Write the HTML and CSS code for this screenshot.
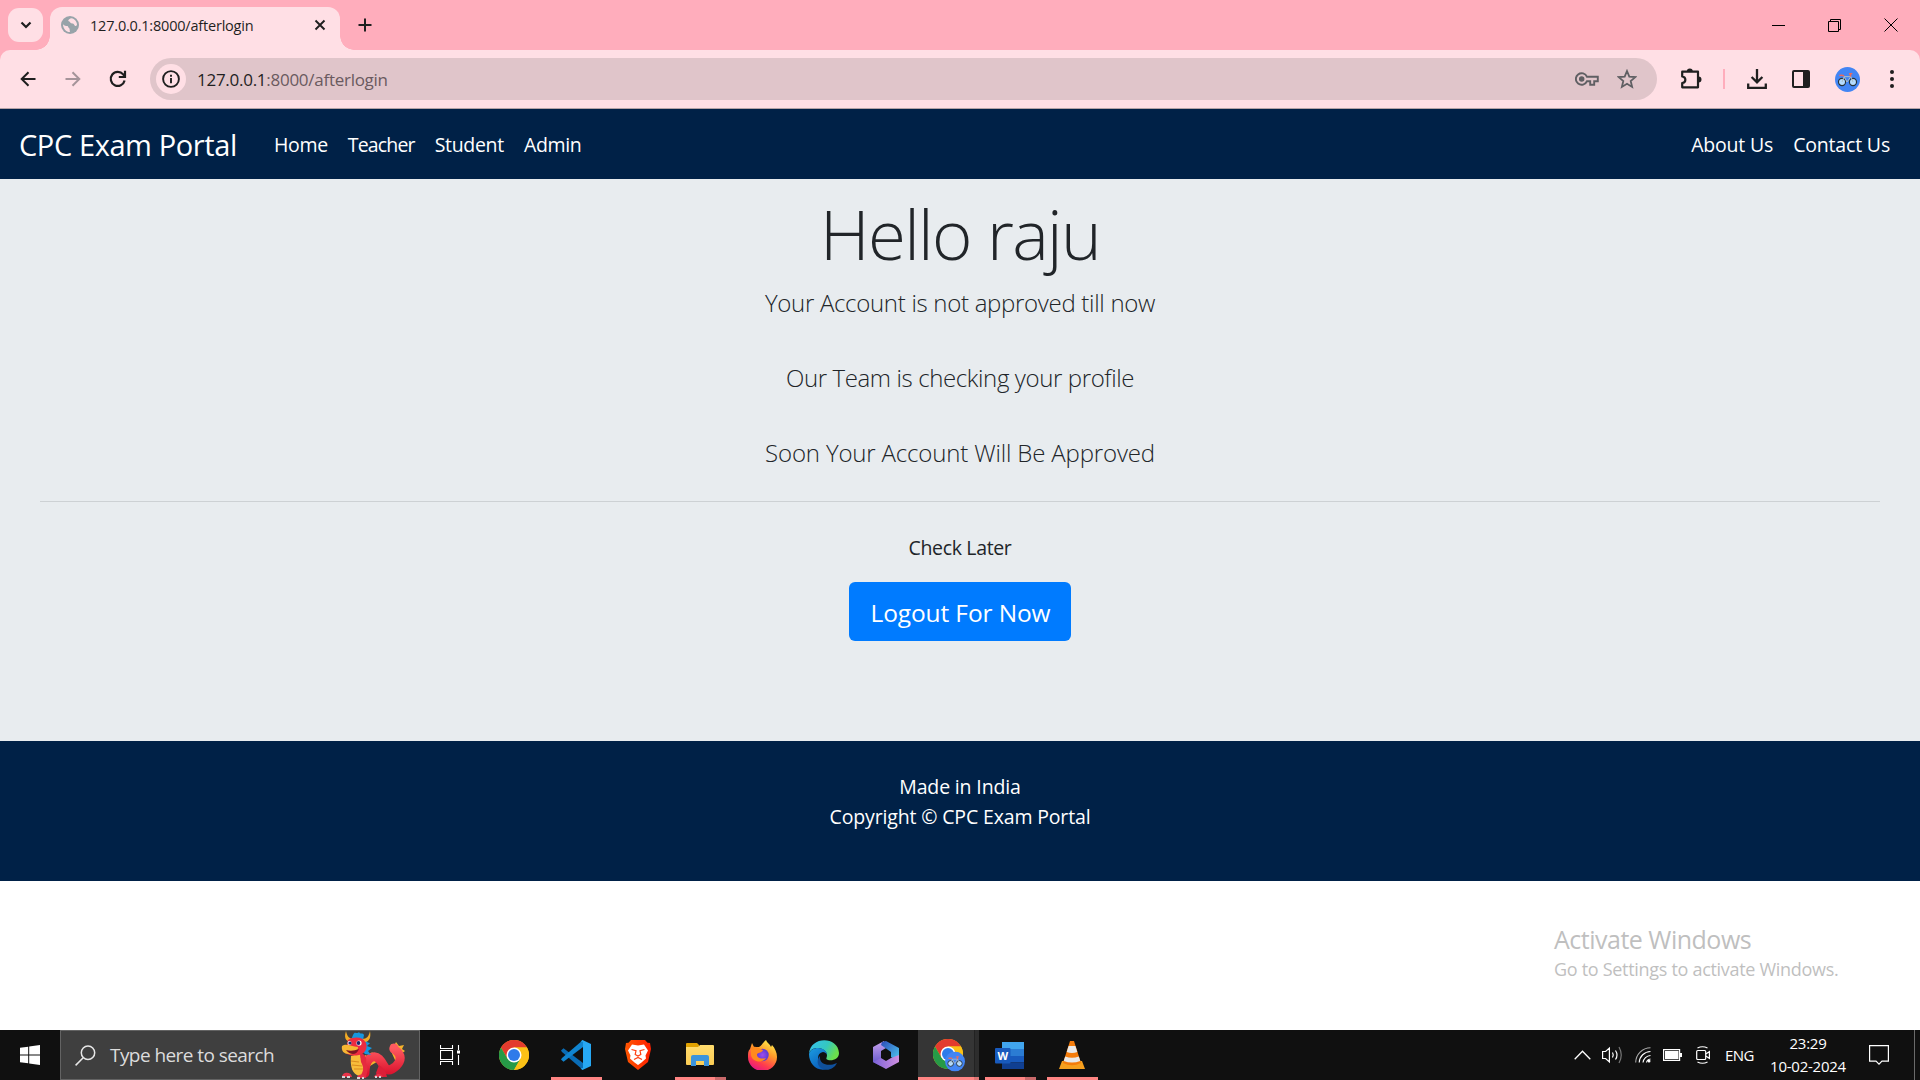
FILE: index.html
```html
<!DOCTYPE html>
<html lang="en">
<head>
<meta charset="utf-8">
<title>127.0.0.1:8000/afterlogin</title>
<link rel="stylesheet" href="styles.css">
</head>
<body>
<svg class="defs" width="0" height="0">
  <defs>
    <linearGradient id="ff" x1="0.8" y1="0" x2="0.3" y2="1"><stop offset="0" stop-color="#fff44f"/><stop offset=".4" stop-color="#ff9a2a"/><stop offset=".75" stop-color="#ff3b4e"/><stop offset="1" stop-color="#e31587"/></linearGradient>
    <radialGradient id="ffg"><stop offset="0" stop-color="#a04cf0"/><stop offset="1" stop-color="#5a3bd0"/></radialGradient>
    <linearGradient id="edgeA" x1="0" y1="0" x2="1" y2="0.4"><stop offset="0" stop-color="#35c1f1"/><stop offset=".6" stop-color="#34c8c0"/><stop offset="1" stop-color="#6be04c"/></linearGradient>
    <linearGradient id="edgeB" x1="0" y1="0" x2="0.6" y2="1"><stop offset="0" stop-color="#1b9de2"/><stop offset="1" stop-color="#0a5ebc"/></linearGradient>
    <linearGradient id="brave" x1="0" y1="0" x2="1" y2="0"><stop offset="0" stop-color="#ff5601"/><stop offset="1" stop-color="#ff2000"/></linearGradient>
    <linearGradient id="mA" x1="0" y1="0" x2="0" y2="1"><stop offset="0" stop-color="#c9a3ee"/><stop offset="1" stop-color="#5b50c8"/></linearGradient>
    <linearGradient id="mB" x1="0" y1="0" x2="1" y2="1"><stop offset="0" stop-color="#2c4bb8"/><stop offset="1" stop-color="#4fd0f2"/></linearGradient>
    <linearGradient id="mC" x1="0" y1="0" x2="1" y2="0"><stop offset="0" stop-color="#7b62d8"/><stop offset="1" stop-color="#cf8fe0"/></linearGradient>
    <linearGradient id="folder" x1="0" y1="0" x2="0" y2="1"><stop offset="0" stop-color="#ffdc6e"/><stop offset="1" stop-color="#fbcc54"/></linearGradient>
    <linearGradient id="drag" x1="0" y1="0" x2="0" y2="1"><stop offset="0" stop-color="#ff5a60"/><stop offset="1" stop-color="#dc1530"/></linearGradient>
    <symbol id="chrome" viewBox="0 0 48 48">
      <circle cx="24" cy="24" r="24" fill="#fbc116"/>
      <path d="M3.2 12A24 24 0 0 1 44.8 12H24L13.6 30Z" fill="#e33b2e"/>
      <path d="M3.2 12A24 24 0 0 0 24 48L34.4 30H13.6Z" fill="#269a47"/>
      <path d="M24 12H44.8A24 24 0 0 1 24 48L34.4 30Z" fill="#fbc116"/>
      <circle cx="24" cy="24" r="12" fill="#fff"/><circle cx="24" cy="24" r="9.6" fill="#2f7bea"/>
    </symbol>
    <symbol id="bike" viewBox="0 0 26 26">
      <circle cx="13" cy="13" r="13" fill="#4285f4"/>
      <g fill="#b5dcff" stroke="#263238" stroke-width="1.2"><circle cx="7.3" cy="15.600" r="3.700"/><circle cx="18.700" cy="15.600" r="3.700"/></g>
      <path d="M7.300 15.600L9.500 10h7l2.200 5.600M9.500 10L12.500 15.600L16.500 10" fill="none" stroke="#b0bec5" stroke-width="1"/>
      <path d="M4.500 9q2-1 5 0M16.500 10l-1-3h2.500" fill="none" stroke="#ef6c5a" stroke-width="1.600"/>
    </symbol>
  </defs>
</svg>

<header class="browser">
  <div class="tabstrip">
    <div class="tab-search"><svg width="12" height="8" viewBox="0 0 12 8"><path d="M1.500 1.500L6 6l4.500-4.500" fill="none" stroke="#1f1f1f" stroke-width="2.200"/></svg></div>
    <div class="tab">
      <svg class="globe" width="18" height="18" viewBox="0 0 18 18"><circle cx="9" cy="9" r="9" fill="#98a3a9"/><path d="M2 8.200c1.500 1.600 3 1.800 4.200 1.900c1.200.2 1 1.700 2 2.200c.8.400.2 2.200.8 3.700C5 16 2 12.500 2 8.200M10.500 2.200c-1.500.2-3.500 1.300-3.200 2.500c.2 1 2 .6 2 1.800c.1 1 1.600.9 2.600 1.100c1.400.3 1.300 2.200 2.400 2.400c.8.200 1.500-.5 1.700-1.200C16 5.300 13.600 2.800 10.500 2.200" fill="#ffdfe5"/></svg>
      <span class="tab-title">127.0.0.1:8000/afterlogin</span>
      <svg class="tab-close" width="12" height="12" viewBox="0 0 12 12"><path d="M1.500 1.500l9 9M10.500 1.500l-9 9" stroke="#1f1f1f" stroke-width="1.900"/></svg>
    </div>
    <svg class="tab-new" width="14" height="14" viewBox="0 0 14 14"><path d="M7 .5v13M.5 7h13" stroke="#1f1f1f" stroke-width="2"/></svg>
    <div class="window-controls">
      <svg width="13" height="13" viewBox="0 0 13 13"><path d="M0 6.500h13" stroke="#000"/></svg>
      <svg width="13" height="13" viewBox="0 0 13 13" fill="none" stroke="#000"><path d="M.5 2.500h10v10H.5zM2.500 2.500v-2h10v10h-2"/></svg>
      <svg width="14" height="14" viewBox="0 0 14 14"><path d="M.5 .5l13 13M13.500 .5l-13 13" stroke="#000"/></svg>
    </div>
  </div>
  <div class="toolbar">
    <div class="nav-buttons">
      <svg width="16" height="16" viewBox="0 0 16 16" fill="none" stroke="#1f1f1f" stroke-width="2"><path d="M15.500 8H2M8.500 1.200L1.700 8l6.800 6.800"/></svg>
      <svg width="16" height="16" viewBox="0 0 16 16" fill="none" stroke="#a5949a" stroke-width="2"><path d="M.5 8H14M7.500 1.200L14.300 8l-6.800 6.800"/></svg>
      <svg width="18" height="18" viewBox="0 0 18 18" fill="none" stroke="#1f1f1f" stroke-width="2.200"><path d="M15.600 10.400A7 7 0 1 1 14.200 4.400L15.800 6"/><path d="M16 .8V7H9.800"/></svg>
    </div>
    <div class="omnibox">
      <span class="site-info"><svg width="18" height="18" viewBox="0 0 18 18"><circle cx="9" cy="9" r="7.900" fill="none" stroke="#1f1f1f" stroke-width="1.900"/><path d="M9 8v5.200M9 4.800v2" stroke="#1f1f1f" stroke-width="1.900"/></svg></span>
      <span class="url"><b>127.0.0.1</b>:8000/afterlogin</span>
      <svg class="key" width="24" height="14" viewBox="0 0 24 14" fill="none" stroke="#5f5f63" stroke-width="1.900"><path d="M12 4.800A5.800 5.800 0 1 0 12 9.200H15.200V12.800H19.200V9.200H22.800V4.800Z"/><circle cx="6.700" cy="7" r="1.800" fill="#5f5f63"/></svg>
      <svg class="star" width="20" height="20" viewBox="0 0 20 20"><path d="M10 2l2.300 5.600 6 .5-4.600 3.900 1.400 5.900L10 14.800 4.900 17.900l1.400-5.900L1.700 8.100l6-.5z" fill="none" stroke="#5f5f63" stroke-width="1.800"/></svg>
    </div>
    <div class="toolbar-right">
      <svg width="22" height="22" viewBox="0 0 22 22"><path d="M2.200 3.700H18v15.600H2.200V15c4.200-.5 4.200-6 0-6.500Z" fill="none" stroke="#1f1f1f" stroke-width="2.200" stroke-linejoin="round"/><path d="M6.800 3.500a3 3 0 0 1 6 0zM18.500 8.500a3 3 0 0 1 0 6z" fill="#1f1f1f"/></svg>
      <i class="divider"></i>
      <svg width="20" height="20" viewBox="0 0 20 20" fill="none" stroke="#1f1f1f" stroke-width="2.300"><path d="M10 0v13M4.600 8L10 13.300 15.400 8M1.200 14.500v4.300h17.600v-4.300"/></svg>
      <svg width="18" height="18" viewBox="0 0 18 18"><rect x="1" y="1" width="16" height="16" rx="1" fill="none" stroke="#1f1f1f" stroke-width="2"/><path d="M11 1h6v16h-6z" fill="#1f1f1f"/></svg>
      <svg width="25" height="25"><use href="#bike"/></svg>
      <svg width="4" height="18" viewBox="0 0 4 18" fill="#1f1f1f"><circle cx="2" cy="2" r="2"/><circle cx="2" cy="9" r="2"/><circle cx="2" cy="16" r="2"/></svg>
    </div>
  </div>
</header>

<nav class="navbar">
  <a class="brand">CPC Exam Portal</a>
  <div class="links"><a>Home</a><a class="tight">Teacher</a><a>Student</a><a>Admin</a></div>
  <div class="links end"><a>About Us</a><a>Contact Us</a></div>
</nav>

<main class="jumbotron">
  <h1>Hello raju</h1>
  <p class="lead">Your Account is not approved till now</p>
  <p class="lead narrow">Our Team is checking your profile</p>
  <p class="lead wide">Soon Your Account Will Be Approved</p>
  <hr>
  <p class="later">Check Later</p>
  <a class="btn">Logout For Now</a>
</main>

<footer class="footer">
  <p>Made in India</p>
  <p>Copyright © CPC Exam Portal</p>
</footer>

<section class="desktop">
  <div class="watermark">
    <div class="wm-title">Activate Windows</div>
    <div class="wm-sub">Go to Settings to activate Windows.</div>
  </div>
</section>

<div class="taskbar">
  <div class="start"><svg width="20" height="20" viewBox="0 0 20 20" fill="#fff"><path d="M0 2.800L8.200 1.700V9.500H0zM9.200 1.500L20 0v9.500H9.200zM0 10.500h8.200v7.800L0 17.200zM9.200 10.500H20V20L9.200 18.500z"/></svg></div>
  <div class="search">
    <svg width="21" height="21" viewBox="0 0 21 21" fill="none" stroke="#e8e8e8" stroke-width="1.500"><circle cx="13" cy="7.800" r="6.700"/><path d="M8.200 12.800L.6 20.400"/></svg>
    <span>Type here to search</span>
    <svg class="dragon" width="66" height="48" viewBox="0 0 66 48">
      <path d="M20 32l-1-5 4 1 1-4 4 2 3-5 3 4 5-1v5l-10 6zM49 18l1-5 3 2 2-4 3 4 5-1-2 4 3 2-4 3 3 3-5 1 0 4-4-2z" fill="#f5b32a"/>
      <path d="M24 42C24 28 32 22 38 28s6 14 13 10 10-10 7-15-6-4-5-6" fill="none" stroke="url(#drag)" stroke-width="9" stroke-linecap="round" stroke-linejoin="round"/>
      <path d="M38 34q7 4 8 12h-9l-2-4z" fill="#dc1f38"/>
      <path d="M10 25l10-3c-1 6 1 9 4 14c2 4 0 9-5 9c-8-1-10-10-9-20z" fill="#f7bd3b"/>
      <path d="M10 30l8 1M11 34l10 1M13 38l10 0" stroke="#d98b1e" stroke-width="1.200"/>
      <path d="M19 23c5-1 7 4 6 9c3 5 1 10 0 14h-6c4-7 4-9 1-15z" fill="#e52a3f"/>
      <path d="M12 4c2-5 4 0 6-3c1 3 4 0 5 3l-1 5c4-1 3 3 7 3l-3 3 5 2-4 3 3 4-6-1-5-6-9-8z" fill="#1597e0"/>
      <path d="M5 0c-2 6-1 10 5 11l3-3C8 8 6 5 5 0M29 0c1 6 0 11-6 11l-2-3c5 0 7-3 8-8" fill="#f3ab25"/>
      <path d="M7 9c7-4 15-3 18 3c2 5-1 11-7 12c-5 1-8 1-14-2z" fill="#ee2b40"/>
      <path d="M1 15c4-3 9 0 16 1c0 5-4 8-9 7c-5 0-8-3-7-8z" fill="#f7b733"/>
      <path d="M5 19q6 2 13-1q-2 5-6 5q-4 0-7-4z" fill="#7d1423"/>
      <circle cx="8.500" cy="12" r="2" fill="#fff"/><circle cx="18" cy="12" r="2.600" fill="#fff"/><circle cx="9" cy="12" r="1.600" fill="#1b2a6b"/><circle cx="17.500" cy="12" r="1.900" fill="#1b2a6b"/>
      <path d="M1 46c0-5 9-6 10 0zM16 47c1-5 8-4 9 0zM33 46c1-4 8-4 9 0z" fill="#e8344a"/>
      <path d="M1 46h3M6 46h3M16 47h3M21 47h2M34 46h2M38 46h2" stroke="#d9d3d8" stroke-width="2"/>
    </svg>
  </div>
  <div class="apps">
    <div class="app view"><svg width="20" height="20" viewBox="0 0 20 20" fill="none" stroke="#fff"><path d="M.5 5.500h12v9H.5zM.5 0v3.500h12V0M.5 20v-3.500h12V20M18.500 0v5M18.500 10v10" stroke-width="1.100"/><path d="M17 5.500h3v3h-3z" fill="#fff" stroke="none"/></svg></div>
    <div class="app"><svg width="30" height="30"><use href="#chrome"/></svg></div>
    <div class="app open"><svg width="30" height="30" viewBox="0 0 30 30"><path d="M0 10.500L2.500 8.200 22 23 22 30 1 12z" fill="#0a6cb5"/><path d="M0 19.500L2.500 21.800 22 7 22 0 1 18z" fill="#1084cf"/><path d="M21.500 0L30 4v22l-8.500 4-2-1.500 2.500-.5V2l-2.500-.5z" fill="#27a8f3"/></svg></div>
    <div class="app"><svg width="26" height="30" viewBox="0 0 26 30"><path d="M6 0h14l2.500 2.700L25 3l1 6-3 13-10 8L3 22 0 9 1 3l2.500-.3z" fill="url(#brave)"/><path d="M7 4.500l6 1 6-1 4 6-2.500 5 .5 3-4.500 4-3.500 2.500-3.500-2.500-4.500-4 .5-3-2.500-5z" fill="#fff"/><path d="M6.500 9.500l4.500 1.200-.8 3.800 2.800 1.500 2.800-1.500-.8-3.800 4.500-1.200M9 19.500l4-2 4 2" fill="none" stroke="#ff4012" stroke-width="1.200"/></svg></div>
    <div class="app open multi"><svg width="28" height="24" viewBox="0 0 28 24"><path d="M0 1q0-1 1-1h10l2 2v3H0z" fill="#e0a100"/><path d="M0 4h12l2-2h13q1 0 1 1v18q0 1-1 1H1q-1 0-1-1z" fill="url(#folder)"/><path d="M5 23V14q0-2 2-2h14q2 0 2 2v9h-5v-5h-8v5z" fill="#3b94dc"/></svg></div>
    <div class="app"><svg width="29" height="30" viewBox="0 0 29 30"><path d="M2 9L4 3l2 4 5 0C14 6 15 2 18 0c1 3 4 4 5 7l1-2c3 3 5 8 5 12a14 13.500 0 0 1-29 0C0 13 0 11 2 9z" fill="url(#ff)"/><circle cx="14.500" cy="15" r="6.200" fill="url(#ffg)"/><path d="M3 8c4-3 7 0 12 2c-1 3-4 2-6 4c0 5 5 5 9 4c-4 6-14 4-15-3z" fill="#ff8a1d"/></svg></div>
    <div class="app"><svg width="30" height="30" viewBox="0 0 30 30"><path d="M0 14C1-4 29-4 30 13c0 6-6 8-11 7c-3-1-1-2-1-5c0-4-5-7-9-7C4 8 1 10 0 14z" fill="url(#edgeA)"/><path d="M0 14c1-4 5-6 9-6c5 0 9 3 9 7c0 0-1-3-4-3c-8 1-6 14 4 17C8 32 0 24 0 14z" fill="url(#edgeB)"/><path d="M11 18c0 6 8 9 17 5c-3 6-9 8-14 6c-6-2-7-9-3-13z" fill="#10509b"/></svg></div>
    <div class="app"><svg width="26" height="28" viewBox="0 0 26 28"><path d="M11 0L0 6v15l8 4V10l5-3z" fill="url(#mA)"/><path d="M9 1l4-1 13 7v14l-8-5v-5L8 4z" fill="url(#mB)"/><path d="M26 21l-13 7L0 21l8-4 5 3 5-3 8-3z" fill="url(#mC)"/><path d="M13 9l4.500 2.500v5L13 19l-4.500-2.500v-5z" fill="#101010"/></svg></div>
    <div class="app open multi active"><svg width="32" height="33" viewBox="0 0 32 33"><use href="#chrome" width="30" height="30"/><use href="#bike" x="12" y="12.500" width="20" height="20"/></svg></div>
    <div class="app open multi"><svg width="30" height="27" viewBox="0 0 30 27"><path d="M7 0h22v7H7z" fill="#41a5ee"/><path d="M7 7h22v7H7z" fill="#2b7cd3"/><path d="M7 14h22v6.500H7z" fill="#185abd"/><path d="M7 20.500h22V27H7z" fill="#103f91"/><rect y="6" width="15.500" height="15.500" rx="1" fill="#185abd"/><text x="7.800" y="18" class="word-w">W</text></svg></div>
    <div class="app open"><svg width="26" height="28" viewBox="0 0 26 28"><path d="M3 20h20l3 8H0z" fill="#f7a01e"/><path d="M11 0h4l7 22q-9 4.500-18 0z" fill="#f57c0a"/><path d="M9.600 5h6.800l1.900 6q-5.300 2-10.600 0zM6.200 15.500q6.800 2.500 13.600 0l1.500 4.500q-8.300 3-16.600 0z" fill="#e9e9e9"/></svg></div>
  </div>
  <div class="tray">
    <svg class="up" width="17" height="10" viewBox="0 0 17 10"><path d="M.7 9.200L8.500 1.200l7.800 8" fill="none" stroke="#fff" stroke-width="1.300"/></svg>
    <svg class="vol" width="21" height="18" viewBox="0 0 21 18" fill="none" stroke="#fff" stroke-width="1.200"><path d="M.6 5.500h3L7.400 2v14L3.600 12.500h-3zM10.500 6.500q1.500 2.500 0 5M13.500 4.500q3 4.500 0 9"/><path d="M17 1q4.500 8 0 16" stroke="#777"/></svg>
    <svg class="wifi" width="16" height="16" viewBox="0 0 16 16" fill="none" stroke="#fff" stroke-width="1.100"><path d="M.7 15.500A15 15 0 0 1 15.500 .7" stroke="#aaa"/><path d="M4.200 15.500A11.500 11.500 0 0 1 15.500 4.500M8 15.500A8 8 0 0 1 15.500 8.500"/><path d="M11.500 15.500q.5-3 4-3.500"/><circle cx="14" cy="14" r="1.500" fill="#fff" stroke="none"/></svg>
    <svg class="bat" width="19" height="12" viewBox="0 0 19 12"><path d="M.6 .6h16v10.800H.6z" fill="none" stroke="#fff" stroke-width="1.200"/><path d="M2 2h13.500v8H2zM17 4h2v4h-2z" fill="#fff"/></svg>
    <svg class="meet" width="15" height="18" viewBox="0 0 15 18" fill="none" stroke="#fff" stroke-width="1.200"><rect x=".7" y="4.500" width="9" height="9" rx="1"/><path d="M9.700 8l3.700-2.300v6.600L9.700 10M1.500 2Q6.500-.5 11.500 2M1.500 16q5 2.500 10 0"/></svg>
    <span class="lang">ENG</span>
    <div class="clock"><span>23:29</span><span>10-02-2024</span></div>
    <svg class="note" width="20" height="20" viewBox="0 0 20 20"><path d="M.6 .6h18.800v15.500h-6.400l-3 3-3-3H.6z" fill="none" stroke="#fff" stroke-width="1.200"/></svg>
    <i class="peek"></i>
  </div>
</div>
</body>
</html>
```
FILE: styles.css
```css
* { box-sizing: border-box; }
body { margin: 0; width: 1920px; height: 1080px; overflow: hidden; display: flex; flex-direction: column; background: #fff; color: #212529; font-family: "Open Sans", "Noto Sans", sans-serif; font-size: 19.500px; }
p, h1 { margin: 0; }
svg { display: block; flex: none; }
span, a { white-space: nowrap; }
.defs { position: absolute; }

/* browser window */
.browser { height: 109px; flex: none; background: #ffadbc; border-bottom: 1px solid #b5a3a7; }
.tabstrip { height: 50px; display: flex; align-items: center; padding: 0 0 0 8px; }
.tab-search { width: 35px; height: 34px; border-radius: 11px; background: #ffdfe5; display: flex; align-items: center; justify-content: center; }
.tab { position: relative; width: 290px; height: 43px; margin: 7px 0 0 7px; padding: 0 14px 7px 11px; border-radius: 12px 12px 0 0; background: #ffdfe5; display: flex; align-items: center; }
.tab::before, .tab::after { content: ""; position: absolute; bottom: 0; width: 14px; height: 14px; }
.tab::before { left: -14px; background: radial-gradient(circle at 0 0, transparent 13.500px, #ffdfe5 14px); }
.tab::after { right: -14px; background: radial-gradient(circle at 100% 0, transparent 13.500px, #ffdfe5 14px); }
.tab-title { margin-left: 11px; font-size: 14.500px; letter-spacing: -.2px; color: #1f1f1f; }
.tab-close { margin-left: auto; }
.tab-new { margin-left: 18px; }
.window-controls { margin-left: auto; display: flex; align-items: center; gap: 43px; padding-right: 22px; }
.toolbar { height: 58px; border-radius: 10px 10px 0 0; background: #ffdfe5; display: flex; align-items: center; }
.nav-buttons { width: 150px; padding-left: 20px; display: flex; align-items: center; gap: 28.500px; }
.omnibox { width: 1507px; height: 42px; border-radius: 21px; background: #e0c5ca; display: flex; align-items: center; padding: 0 20px 0 6px; }
.site-info { width: 30px; height: 30px; border-radius: 50%; background: #ffdfe5; display: flex; align-items: center; justify-content: center; }
.url { margin-left: 11px; font-size: 17px; letter-spacing: -.27px; color: #6a5a5f; }
.url b { font-weight: 400; color: #1f1f1f; }
.key { margin-left: auto; }
.star { margin-left: 18px; }
.toolbar-right { flex: 1; display: flex; align-items: center; padding-left: 23px; }
.divider { width: 2px; height: 20px; background: #ffadbc; margin: 0 22px 0 21px; }
.toolbar-right svg + svg { margin-left: 25px; }
.toolbar-right svg:last-child { margin-left: 30px; }

/* portal page */
.navbar { height: 70px; flex: none; background: #002147; color: #fff; display: flex; align-items: center; padding: 1px 30px 0 19px; }
.brand { font-size: 29px; letter-spacing: -.4px; width: 255px; }
.links { display: flex; gap: 20px; letter-spacing: -.32px; }
.tight { letter-spacing: -.84px; }
.links.end { margin-left: auto; letter-spacing: -.18px; }
.jumbotron { height: 562px; flex: none; background: #e8ecef; text-align: center; padding: 13px 40px 0; }
h1 { font-size: 69px; line-height: 82px; padding-bottom: 2px; font-weight: 300; letter-spacing: -1.700px; }
.lead { font-size: 24px; line-height: 38px; font-weight: 300; letter-spacing: -.3px; margin: 8px 0 37px; }
.lead.wide { letter-spacing: -.16px; }
.lead.narrow { letter-spacing: -.38px; }
.lead + .lead { margin-top: 0; }
hr { margin: -8px 0 0; border: 0; border-top: 1px solid #cdd1d4; }
.later { line-height: 30px; letter-spacing: -.34px; margin: 31px 0 19px; }
.btn { display: inline-flex; width: 222px; height: 59px; padding: 1px 0 0 1px; border-radius: 6px; background: #007bff; color: #fff; font-size: 24.500px; letter-spacing: -.12px; align-items: center; justify-content: center; }
.footer { height: 140px; flex: none; background: #002147; color: #fff; text-align: center; padding-top: 31px; line-height: 30px; letter-spacing: -.15px; }

/* desktop */
.desktop { flex: 1; padding: 38px 0 0 1554px; }
.watermark { color: #bfbfbf; }
.wm-title { font-size: 25px; line-height: 40px; letter-spacing: -.5px; }
.wm-sub { font-size: 18px; line-height: 21px; letter-spacing: -.3px; }
.taskbar { height: 50px; flex: none; background: #101010; display: flex; color: #fff; }
.start { width: 60px; display: flex; align-items: center; justify-content: center; }
.search { width: 360px; background: #3f3f3f; border: 1px solid #636363; display: flex; align-items: center; padding-left: 14px; color: #dcdcdc; font-size: 19px; letter-spacing: -.56px; gap: 14px; }
.dragon { margin-left: auto; margin-right: 12px; }
.apps { display: flex; }
.app { position: relative; width: 62px; display: flex; align-items: center; justify-content: center; }
.view { width: 63px; padding-right: 3px; }
.open::after { content: ""; position: absolute; left: 6px; bottom: 0; width: 51px; height: 3px; background: #ff8583; }
.multi::after { background: linear-gradient(90deg, #ff8583 40px, #c9696a 40px); }
.active { background: linear-gradient(90deg, #353535 56px, #222 56px, #222 57px, #2d2d2d 57px); width: 61px; margin-left: 1px; }
.active::after { left: 0; width: 61px; background: linear-gradient(90deg, #ff8583 56px, #dd7675 56px); }
.word-w { font: 700 11px "Open Sans", sans-serif; fill: #fff; text-anchor: middle; letter-spacing: 0; }
.tray { margin-left: auto; display: flex; align-items: center; font-size: 15px; letter-spacing: -.24px; }
.vol { margin-left: 11px; }
.wifi { margin-left: 12px; }
.bat { margin-left: 12px; }
.meet { margin-left: 14px; }
.lang { margin-left: 14px; letter-spacing: -.5px; }
.clock { width: 76px; margin: 0 23px 0 16px; text-align: center; line-height: 23px; display: flex; flex-direction: column; align-items: center; }
.peek { width: 1px; height: 50px; background: #6a6a6a; margin-left: 25px; margin-right: 5px; }
```
